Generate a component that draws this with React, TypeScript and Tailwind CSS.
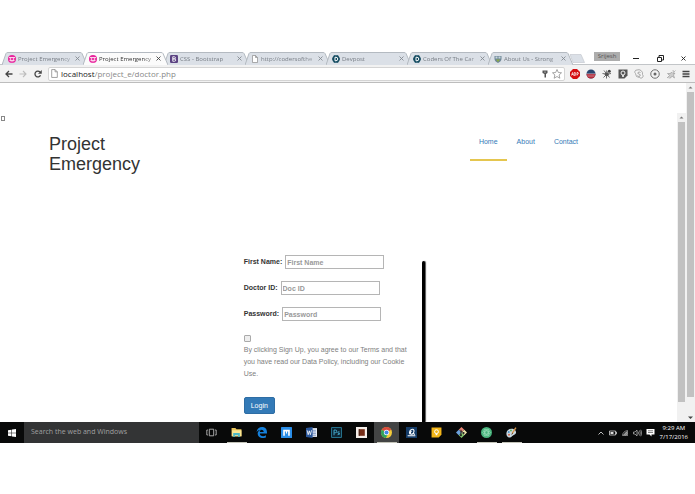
import React from "react";

const ui = "font-['Open_Sans','Noto_Sans',sans-serif]";
const arial = "font-['Liberation_Sans',Arial,sans-serif]";

type IconProps = { className?: string };

function ProjectIcon() {
  return (
    <svg viewBox="0 0 16 16" className="size-2 shrink-0">
      <circle cx="8" cy="8" r="8" fill="#e8249c" />
      <path d="M2 5h12M3 11h10" stroke="#fff" strokeWidth="1.6" />
      <circle cx="5" cy="8" r="1.6" fill="#fff" />
      <circle cx="11" cy="8" r="1.6" fill="#fff" />
      <path d="M5 13.5h6" stroke="#fff" strokeWidth="1" />
    </svg>
  );
}

function BootstrapIcon() {
  return (
    <svg viewBox="0 0 16 16" className="size-2 shrink-0">
      <rect width="16" height="16" rx="2.5" fill="#5b4282" />
      <path d="M5.5 3.5h3.2a2.1 2.1 0 0 1 0 4.3H5.5zM5.5 7.8h3.6a2.3 2.3 0 0 1 0 4.7H5.5z" fill="none" stroke="#fff" strokeWidth="1.7" />
    </svg>
  );
}

function FileIcon({ className = "size-2" }: IconProps) {
  return (
    <svg viewBox="0 0 16 16" className={`${className} shrink-0`}>
      <path d="M3 1h6l4 4v10H3zM9 1v4h4" fill="#fff" stroke="#8a8a8a" strokeWidth="1.4" />
    </svg>
  );
}

function DevpostIcon() {
  return (
    <svg viewBox="0 0 16 16" className="size-2 shrink-0">
      <path d="M4 1h8l4 7-4 7H4L0 8z" fill="#124a60" stroke="#124a60" />
      <path d="M6 4.5h2a3.5 3.5 0 0 1 0 7H6z" fill="none" stroke="#fff" strokeWidth="2" />
    </svg>
  );
}

function ShieldIcon() {
  return (
    <svg viewBox="0 0 16 16" className="size-2 shrink-0">
      <path d="M1 2h14v6c0 4-4 6-7 8-3-2-7-4-7-8z" fill="#6f8797" />
      <path d="M3 3h4v4H3zM9 3h4v4H9z" fill="#c5d5dc" />
      <path d="M4 9h8l-4 5z" fill="#8cad45" />
    </svg>
  );
}

function CloseIcon({ className }: IconProps) {
  return (
    <svg viewBox="0 0 10 10" className={`size-[5px] ${className ?? ""}`}>
      <path d="M1 1l8 8M9 1L1 9" stroke="currentColor" strokeWidth="1.8" />
    </svg>
  );
}

const tabs = [
  { title: "Project Emergency", icon: <ProjectIcon /> },
  { title: "Project Emergency", icon: <ProjectIcon />, active: true },
  { title: "CSS - Bootstrap", icon: <BootstrapIcon /> },
  { title: "http://codersofthe", icon: <FileIcon /> },
  { title: "Devpost", icon: <DevpostIcon /> },
  { title: "Coders Of The Car", icon: <DevpostIcon /> },
  { title: "About Us - Strong", icon: <ShieldIcon /> },
];

function Tab({ title, icon, active }: { title: string; icon: React.ReactNode; active?: boolean }) {
  return (
    <div className={`-mr-1 grid h-[13px] w-[85px] ${active ? "z-10" : ""}`}>
      <svg viewBox="0 0 85 13" preserveAspectRatio="none" className="col-start-1 row-start-1 size-full">
        <path d="M0 13L4 1.5Q4.4 .5 6 .5H78Q79.600 .5 80 1.500L85 13" fill={active ? "#fbfbfb" : "#dbe0e7"} stroke="#b4bac1" strokeWidth="1" />
      </svg>
      <div className="z-10 col-start-1 row-start-1 flex items-center justify-between pr-[7px] pl-[6px]">
        <button className="flex items-center gap-[2px]">
          {icon}
          <span className={`text-left text-[6px] leading-[10px] whitespace-nowrap [mask-image:linear-gradient(to_right,black_44px,#0006_54px)] ${active ? "text-[#333]" : "text-[#777d85]"}`}>
            {title}
          </span>
        </button>
        <button aria-label="Close tab" className={active ? "text-[#444]" : "text-[#858b92]"}>
          <CloseIcon />
        </button>
      </div>
    </div>
  );
}

function Browser() {
  return (
    <header className={ui}>
      <div className="flex h-[13px] items-stretch justify-between border-b border-[#c2c5c8] bg-white pl-[2px]">
        <div className="flex">
          {tabs.map((t, i) => (
            <Tab key={i} {...t} />
          ))}
          <button aria-label="New tab" className="self-center">
            <svg viewBox="0 0 16 9" className="h-[9px] w-4">
              <path d="M1 .5h11l3.500 8H4z" fill="#dbe0e7" stroke="#c5cad0" strokeWidth=".7" />
            </svg>
          </button>
        </div>
        <div className="flex items-start text-[#222]">
          <button className="mr-[13px] h-[9px] w-[26px] bg-[#adadad] text-[6px] leading-[9px] text-[#555]">Srijesh</button>
          <button aria-label="Minimize" className="mt-[3px] mr-[17px]">
            <svg viewBox="0 0 7 7" className="size-[7px]"><path d="M0 3.500h6" stroke="currentColor" /></svg>
          </button>
          <button aria-label="Restore" className="mt-[3px] mr-[17px]">
            <svg viewBox="0 0 7 7" className="size-[7px]"><path d="M.5 2.500h4v4h-4zM2 2V.5h4.500v4.500H5" fill="none" stroke="currentColor" /></svg>
          </button>
          <button aria-label="Close" className="mt-[4px] mr-[9px]"><CloseIcon /></button>
        </div>
      </div>

      <div className="flex h-[18px] items-center border-b border-[#bdbdbd] bg-[#f2f2f2] pr-[5px] pl-[5px] text-[#444]">
        <button aria-label="Back" className="mr-[6px]">
          <svg viewBox="0 0 16 16" className="size-2"><path d="M15 8H2M8 2L2 8l6 6" fill="none" stroke="currentColor" strokeWidth="2.600" /></svg>
        </button>
        <button aria-label="Forward" className="mr-[7px] text-[#bdbdbd]">
          <svg viewBox="0 0 16 16" className="size-2"><path d="M1 8h13M8 2l6 6-6 6" fill="none" stroke="currentColor" strokeWidth="2.200" /></svg>
        </button>
        <button aria-label="Reload" className="mr-[6px]">
          <svg viewBox="0 0 16 16" className="size-2"><path d="M13 10.500A5.800 5.800 0 1 1 12 4" fill="none" stroke="currentColor" strokeWidth="2.600" /><path d="M15.500 0v7.500H8z" fill="currentColor" /></svg>
        </button>
        <div className="flex h-[14px] min-w-0 flex-1 items-center gap-[2px] rounded-xs border border-[#d4d4d4] bg-white pr-[2px] pl-px">
          <FileIcon className="size-[9px]" />
          <span className="flex-1 text-[8px] leading-3 text-[#888]">
            <span className="text-[#222]">localhost</span>/project_e/doctor.php
          </span>
          <svg viewBox="0 0 16 16" className="size-2"><path d="M3 1h10v5l-3 2v7H7V8L3 6z" fill="#555" /><circle cx="8" cy="4" r="1.200" fill="#fff" /></svg>
          <svg viewBox="0 0 20 20" className="ml-px size-[10px]"><path d="M10 1l2.700 6 6.300.6-4.800 4.300 1.500 6.600L10 15l-5.700 3.500 1.500-6.600L1 7.600 7.300 7z" fill="#fff" stroke="#888" strokeWidth="1.500" /></svg>
        </div>
        <div className="ml-[5px] flex items-center gap-[6px]">
          <svg viewBox="0 0 20 20" className="size-[10px]">
            <path d="M6 0h8l6 6v8l-6 6H6l-6-6V6z" fill="#d40e12" />
            <path d="M3 13l2-6 2 6M4 11h2M8.500 13V7h2q1.500 1.500 0 3 1.800 1.500 0 3zM14 13V7h2q2 1.700 0 3.500h-2" fill="none" stroke="#fff" strokeWidth="1.400" />
          </svg>
          <svg viewBox="0 0 20 20" className="size-[10px]">
            <circle cx="10" cy="10" r="9" fill="#28456f" />
            <path d="M1 10h18a9 9 0 0 1-18 0z" fill="#b52c3b" />
            <path d="M1 9.500h18M3 14h14" stroke="#d9bbc3" strokeWidth="1.200" />
          </svg>
          <svg viewBox="0 0 20 20" className="size-[10px]">
            <path d="M4 3l4 5M1 9l7 1M3 17l5-5M9 19v-7M15 17l-4-5M18 9l-6 1M10 7L9 3" stroke="#555" strokeWidth="1.700" />
            <circle cx="9.500" cy="10.500" r="4" fill="#555" /><circle cx="14.500" cy="4.500" r="3" fill="#444" />
          </svg>
          <svg viewBox="0 0 20 20" className="size-[10px]">
            <path d="M1 1h18v12l-6 6H1z" fill="#555" />
            <circle cx="10" cy="8" r="4" fill="none" stroke="#fff" strokeWidth="1.800" /><path d="M8.500 12h3v4h-3z" fill="#fff" />
          </svg>
          <svg viewBox="0 0 20 20" className="size-[10px]">
            <path d="M6 2a8 8 0 0 1 11 9 4 4 0 0 1-6 6A8 8 0 0 1 3 9a4 4 0 0 1 3-7z" fill="#f4f4f4" stroke="#999" strokeWidth="1.600" />
            <path d="M13 7q-3-2-5 0t2 3 2 4-5-1" fill="none" stroke="#999" strokeWidth="1.700" />
          </svg>
          <svg viewBox="0 0 20 20" className="size-[10px]">
            <circle cx="10" cy="10" r="8.500" fill="none" stroke="#707070" strokeWidth="2" /><circle cx="10" cy="10" r="3" fill="#666" />
          </svg>
          <svg viewBox="0 0 20 20" className="size-[10px]">
            <path d="M2 18l5-5-4-4 6 0 2-3 3 3 4-1-3 4 2 6-4-3-3 1-2 3M14 2l1 5M19 3l-4 4" fill="#ccc" stroke="#999" strokeWidth="1.300" />
          </svg>
          <button aria-label="Menu">
            <svg viewBox="0 0 16 16" className="size-2"><path d="M1 3h14M1 8h14M1 13h14" stroke="#444" strokeWidth="2.600" /></svg>
          </button>
        </div>
      </div>
    </header>
  );
}

function Scrollbar({ outer }: { outer?: boolean }) {
  return (
    <div aria-hidden="true" className="flex w-[9px] shrink-0 flex-col items-center bg-[#f1f1f1]">
      <svg viewBox="0 0 9 9" className="size-[9px]"><path d="M2.500 5.500h4l-2-2z" fill="#777" /></svg>
      <div className="w-[7px] flex-1 bg-[#c1c1c1]" />
      {outer ? (
        <svg viewBox="0 0 9 9" className="mt-4 size-[9px]"><path d="M2 3.500h5l-2.500 2.500z" fill="#444" /></svg>
      ) : (
        <div className="h-5" />
      )}
    </div>
  );
}

const fields = [
  { id: "first-name", label: "First Name:", placeholder: "First Name", type: "text" },
  { id: "doctor-id", label: "Doctor ID:", placeholder: "Doc ID", type: "text" },
  { id: "password", label: "Password:", placeholder: "Password", type: "password" },
];

function LoginForm() {
  return (
    <div className="ml-[36%] flex">
      <form className="flex w-[178px] flex-col items-start pb-2" onSubmit={(e) => e.preventDefault()}>
        {fields.map((f) => (
          <div key={f.id} className="mb-3 flex items-center gap-[3px] font-bold">
            <label htmlFor={f.id} className="text-[#333]">{f.label}</label>
            <input id={f.id} type={f.type} placeholder={f.placeholder} className="h-[14px] w-[99px] border border-[#b5b5b5] bg-white px-px placeholder:text-[#999]" />
          </div>
        ))}
        <input id="agree" type="checkbox" className="mt-[2px] size-[7px] appearance-none rounded-[1px] border border-[#aaa] bg-[#eee] checked:bg-[#337ab7]" />
        <label htmlFor="agree" className="mt-[2px] w-[174px] leading-3 text-[#808080]">
          By clicking Sign Up, you agree to our Terms and that you have read our Data Policy, including our Cookie Use.
        </label>
        <button className="mt-[17px] h-[17px] rounded-[2px] border border-[#2e6da4] bg-[#337ab7] px-[6px] text-white">Login</button>
      </form>
      <div className="mt-[6px] w-[3px] rounded-t-sm bg-black shadow-[1px_0_1px_#555]" />
    </div>
  );
}

function Page() {
  return (
    <div className={`flex bg-white ${arial} text-[7px] leading-[10px]`}>
      <div className="min-w-0 flex-1 pt-[30px]">
        <div className="flex">
          <div className="min-w-0 flex-1 overflow-hidden">
            <div className="flex h-[10px] items-center pl-px">
              <span className="h-[5px] w-1 border border-[#888]" />
            </div>
            <div className="flex items-start justify-between pt-[11px] pr-[90px] pl-[49px]">
              <h1 className="w-24 text-[18px] leading-5 text-[#333]">Project Emergency</h1>
              <nav className="flex gap-px text-[#337ab7]">
                <a href="#home" className="border-b-2 border-[#e5c64f] px-[9px] pt-[3px] pb-3">Home</a>
                <a href="#about" className="px-[9px] pt-[3px]">About</a>
                <a href="#contact" className="px-[9px] pt-[3px]">Contact</a>
              </nav>
            </div>
            <main className="pt-[81px]">
              <LoginForm />
            </main>
          </div>
          <Scrollbar />
        </div>
      </div>
      <Scrollbar outer />
    </div>
  );
}

const apps = [
  {
    name: "Task view",
    art: <path d="M6 4h8v12H6zM3.500 5.500h-2v9h2M16.500 5.500h2v9h-2" fill="none" stroke="#bbb" strokeWidth="1.600" />,
  },
  {
    name: "File Explorer",
    open: true,
    art: (
      <>
        <path d="M1 2h7l2 2h9v13H1z" fill="#ecc75e" /><path d="M2 6h17v11H2z" fill="#fbe693" />
        <path d="M4 11h12v7h-3v-3H7v3H4z" fill="#4bb7c5" />
      </>
    ),
  },
  {
    name: "Edge",
    art: <path d="M1 9C2 3 6 0 11 0c6 0 9 4 9 10v2H7c0 5 7 6 11 3v4C11 22 3 19 3 12c0-4 3-6 6-7-1 1-2 2-2 4h7c0-6-9-5-13 0z" fill="#1580db" />,
  },
  {
    name: "Maxthon",
    art: (
      <>
        <rect width="20" height="20" rx="1" fill="#2a8ee8" />
        <path d="M4 16V5h12v11h-3V8h-2v4H9V8H7v8z" fill="#fff" />
      </>
    ),
  },
  {
    name: "Word",
    art: (
      <>
        <path d="M10 2h10v16H10z" fill="#e8edf7" /><path d="M11 6h7M11 9h7M11 12h7M11 15h7" stroke="#385da0" />
        <path d="M0 2l12-2v20L0 18z" fill="#2b579a" /><path d="M2 6l2 8 2-7 2 7 2-8" fill="none" stroke="#fff" strokeWidth="1.500" />
      </>
    ),
  },
  {
    name: "Photoshop",
    art: (
      <>
        <path d="M1 1h18v18H1z" fill="#0c222f" stroke="#2e8cad" strokeWidth="1.500" />
        <path d="M5.500 15V5.500H8q2.500 0 2.500 2.500T8 10.500H6M15.500 9q-3-1-3 1t3 2-3.500 2" fill="none" stroke="#4bb9de" strokeWidth="1.600" />
      </>
    ),
  },
  {
    name: "Wampserver",
    art: (
      <>
        <path d="M0 0h20v20H0z" fill="#f5eee9" /><path d="M5 4h11v12H5z" fill="#762d17" /><path d="M5 4h2v12H5z" fill="#4a2419" />
      </>
    ),
  },
  {
    name: "Chrome",
    open: true,
    focused: true,
    art: (
      <>
        <circle cx="10" cy="10" r="10" fill="#f4cc39" />
        <path d="M10 10L1.300 5A10 10 0 0 1 18.700 5z" fill="#da4c3f" />
        <path d="M10 10L1.300 5A10 10 0 0 0 9 20l4-8z" fill="#32a35c" />
        <circle cx="10" cy="10" r="4.800" fill="#fff" /><circle cx="10" cy="10" r="3.700" fill="#4388e5" />
      </>
    ),
  },
  {
    name: "Launcher",
    art: (
      <>
        <path d="M0 0h20v20H0z" fill="#153c68" />
        <path d="M7 13C5 9 8 4 12 4c4 0 3 8-1 9s-4-3-1-6M14 12l2 2M3 16h14" fill="none" stroke="#fff" strokeWidth="2" />
      </>
    ),
  },
  {
    name: "Keep",
    art: (
      <>
        <path d="M1 1h18v13l-5 5H1z" fill="#f3b619" />
        <circle cx="10" cy="8.500" r="3.500" fill="none" stroke="#fff" strokeWidth="1.800" /><path d="M8.500 12h3v3h-3z" fill="#fff" />
      </>
    ),
  },
  {
    name: "Git",
    art: (
      <>
        <path d="M10 0l5 5-5 5-5-5z" fill="#ea8576" /><path d="M15 5l5 5-5 5-5-5z" fill="#f0e6ac" />
        <path d="M10 10l5 5-5 5-5-5z" fill="#84c46d" /><path d="M5 5l5 5-5 5-5-5z" fill="#6ba1dc" />
        <path d="M9 5v10M9 7l5 4" stroke="#201f20" strokeWidth="1.700" /><circle cx="9" cy="15" r="1.700" fill="#201f20" /><circle cx="14" cy="11" r="1.700" fill="#201f20" />
      </>
    ),
  },
  {
    name: "Atom",
    open: true,
    art: (
      <>
        <circle cx="10" cy="10" r="10" fill="#48b37c" />
        <g fill="none" stroke="#a7e4c2"><ellipse cx="10" cy="10" rx="7" ry="3" /><ellipse cx="10" cy="10" rx="7" ry="3" transform="rotate(60 10 10)" /><ellipse cx="10" cy="10" rx="7" ry="3" transform="rotate(120 10 10)" /></g>
      </>
    ),
  },
  {
    name: "Paint",
    open: true,
    art: (
      <>
        <path d="M1 10c1-6 8-8 13-6s6 8 1 10-4 5-9 5c-4 0-6-5-5-9z" fill="#cbd9e2" />
        <circle cx="5" cy="9" r="1.800" fill="#4a91c8" /><circle cx="9" cy="6.500" r="1.800" fill="#5caf60" /><circle cx="5.500" cy="14" r="1.800" fill="#d2674a" />
        <path d="M18 1l-7 11" stroke="#d8954c" strokeWidth="2.500" /><path d="M12 10l-3 5 4-3z" fill="#5e4430" />
      </>
    ),
  },
];

function Taskbar() {
  return (
    <footer className={`flex h-[21px] items-stretch bg-[#080909] text-white ${ui}`}>
      <button aria-label="Start" className="flex w-6 items-center justify-center">
        <svg viewBox="0 0 16 16" className="size-2" fill="#fff"><path d="M0 2.300L7 1.300v6.200H0zM8 1.100L16 0v7.500H8zM0 8.500h7v6.200l-7-1zM8 8.500h8V16l-8-1.100z" /></svg>
      </button>
      <input aria-label="Search" placeholder="Search the web and Windows" className="w-[175px] bg-[#333435] px-[7px] text-[7px] placeholder:text-[#a0a0a0]" />
      <div className="flex">
        {apps.map((a) => (
          <button
            key={a.name}
            aria-label={a.name}
            className={`flex w-[25px] items-center justify-center ${a.focused ? "bg-[#434444]" : ""}`}
          >
            <span className={`flex h-full w-5 items-center justify-center border-b ${a.open ? "border-[#c3c3b8]" : "border-transparent"}`}>
              <svg viewBox="0 0 20 20" className="size-[11px]">{a.art}</svg>
            </span>
          </button>
        ))}
      </div>
      <div className="ml-auto flex items-center gap-1 pr-[7px]">
        <svg viewBox="0 0 16 16" className="size-2"><path d="M3 11l5-5 5 5" fill="none" stroke="#ddd" strokeWidth="1.700" /></svg>
        <svg viewBox="0 0 16 16" className="size-2"><path d="M1 4h12v8H1zM14 6h1v4h-1" fill="none" stroke="#ddd" strokeWidth="1.500" /><path d="M3 6h6v4H3z" fill="#ddd" /></svg>
        <svg viewBox="0 0 16 16" className="size-2"><path d="M2 14L14 2v12z" fill="#777" /><path d="M3 13c0-5 4-9 10-10M6 13c0-3 3-6 7-7M9 13c0-2 2-3 4-4" fill="none" stroke="#ccc" strokeWidth="1.200" /></svg>
        <svg viewBox="0 0 18 16" className="h-2 w-[9px]"><path d="M1 6h3l4-4v12l-4-4H1zM10 5q2 3 0 6M13 3q3 5 0 10M15.500 1.500q4 6.500 0 13" fill="none" stroke="#ccc" strokeWidth="1.300" /></svg>
        <svg viewBox="0 0 18 18" className="size-[9px]"><path d="M1 2h16v11h-6v4l-4-4H1z" fill="#fff" /><path d="M4 5.500h10M4 9h10" stroke="#333" strokeWidth="1.200" /></svg>
        <div className="ml-px text-center text-[6px] leading-[9px]">
          <div>9:29 AM</div>
          <div>7/17/2016</div>
        </div>
      </div>
    </footer>
  );
}

export default function App() {
  return (
    <div className="min-h-screen bg-white pt-[52px]">
      <Browser />
      <Page />
      <Taskbar />
    </div>
  );
}
